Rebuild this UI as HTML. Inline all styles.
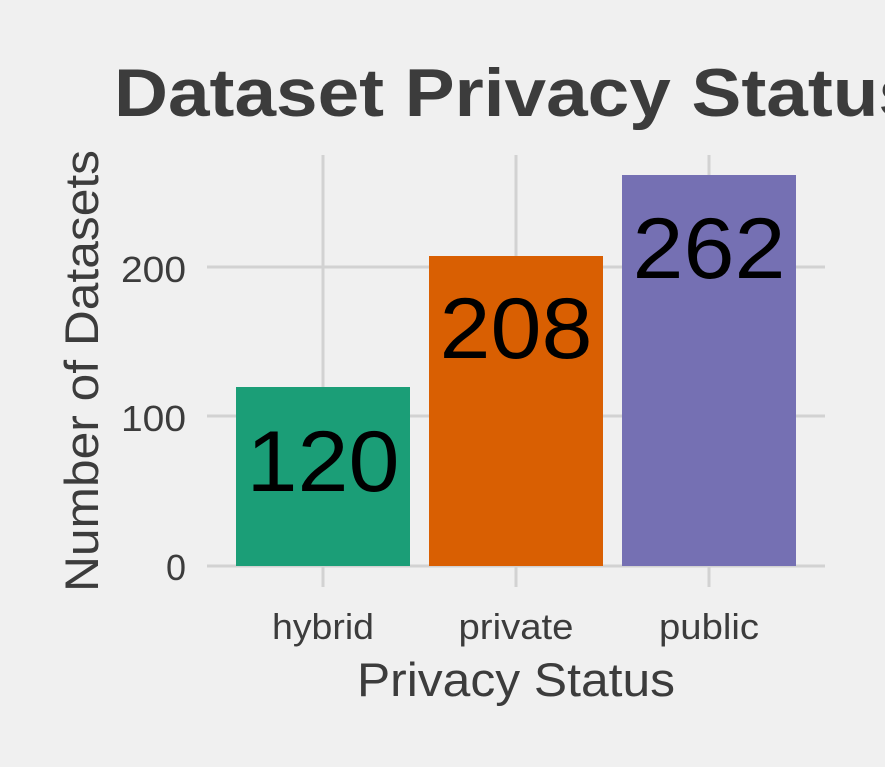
<!DOCTYPE html>
<html><head><style>html,body{margin:0;padding:0;background:#f0f0f0;overflow:hidden}</style></head>
<body>
<svg width="885" height="767" xmlns="http://www.w3.org/2000/svg" style="display:block;font-family:'Liberation Sans',Arial,sans-serif">
<rect width="885" height="767" fill="#f0f0f0"/>
<text x="114" y="116" font-size="68" font-weight="bold" fill="#3c3c3c" textLength="806" lengthAdjust="spacingAndGlyphs">Dataset Privacy Status</text>
<g stroke="#d2d2d2" stroke-width="3">
<line x1="323" y1="155" x2="323" y2="587"/>
<line x1="516" y1="155" x2="516" y2="587"/>
<line x1="709" y1="155" x2="709" y2="587"/>
<line x1="207" y1="267" x2="825" y2="267"/>
<line x1="207" y1="416" x2="825" y2="416"/>
<line x1="207" y1="566" x2="825" y2="566"/>
</g>
<rect x="236" y="387" width="174" height="179" fill="#1b9e77"/>
<rect x="429" y="256" width="174" height="310" fill="#d95f02"/>
<rect x="622" y="175" width="174" height="391" fill="#7570b3"/>
<g font-size="86" fill="#000" text-anchor="middle" lengthAdjust="spacingAndGlyphs">
<text x="323" y="491" textLength="153" lengthAdjust="spacingAndGlyphs">120</text>
<text x="516" y="358" textLength="153" lengthAdjust="spacingAndGlyphs">208</text>
<text x="709" y="278" textLength="153" lengthAdjust="spacingAndGlyphs">262</text>
</g>
<g font-size="36" fill="#3c3c3c" text-anchor="end">
<text x="186" y="282" textLength="65" lengthAdjust="spacingAndGlyphs">200</text>
<text x="186" y="431" textLength="65" lengthAdjust="spacingAndGlyphs">100</text>
<text x="186" y="580">0</text>
</g>
<g font-size="36" fill="#3c3c3c" text-anchor="middle">
<text x="323" y="639" textLength="102" lengthAdjust="spacingAndGlyphs">hybrid</text>
<text x="516" y="639" textLength="115" lengthAdjust="spacingAndGlyphs">private</text>
<text x="709" y="639" textLength="100" lengthAdjust="spacingAndGlyphs">public</text>
</g>
<text x="516" y="696" font-size="47" fill="#3c3c3c" text-anchor="middle" textLength="318" lengthAdjust="spacingAndGlyphs">Privacy Status</text>
<text transform="translate(98,371) rotate(-90)" font-size="47" fill="#3c3c3c" text-anchor="middle" textLength="442" lengthAdjust="spacingAndGlyphs">Number of Datasets</text>
</svg>
</body></html>
